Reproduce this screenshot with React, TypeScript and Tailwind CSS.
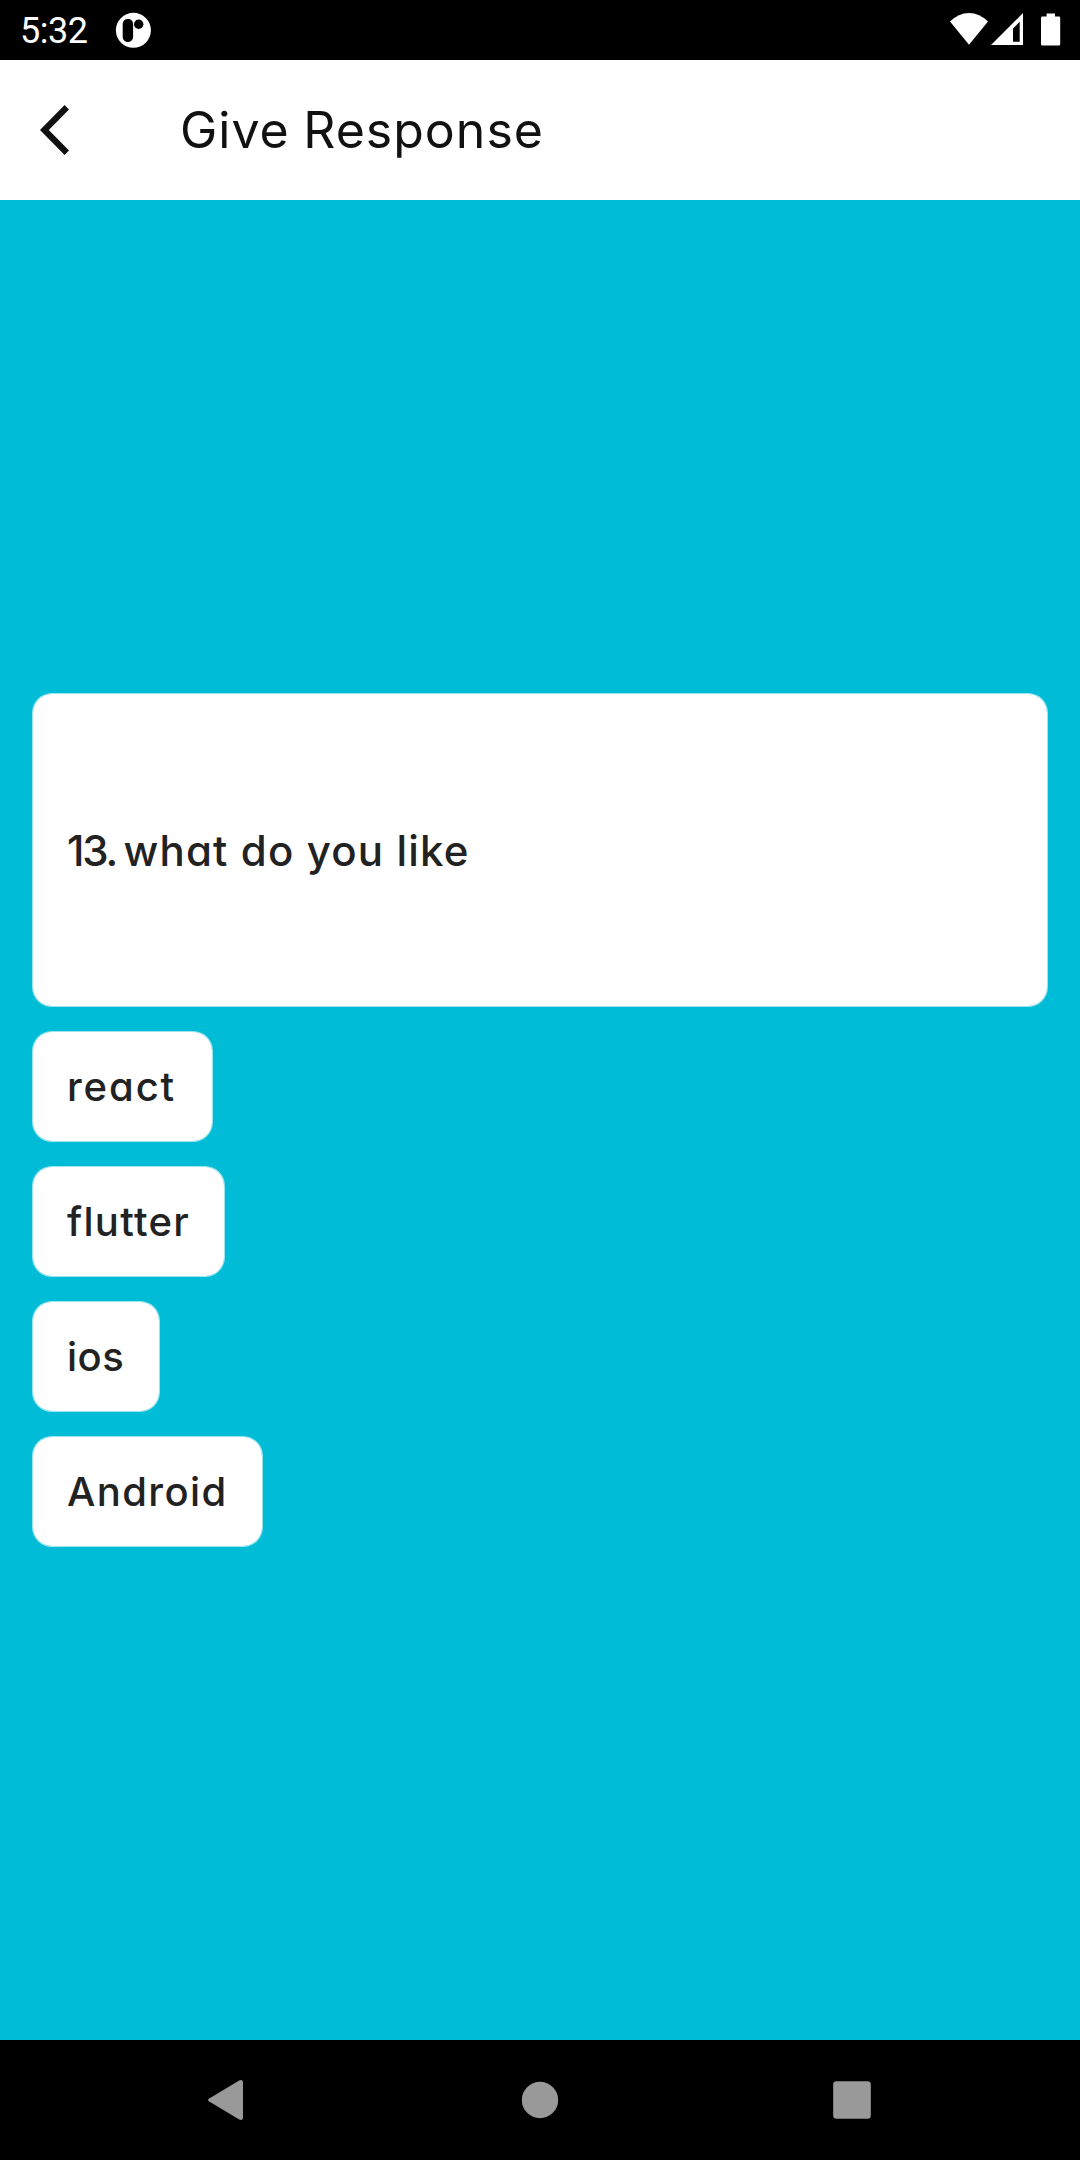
const options = [
  { label: "react", box: "w-[181px]", tracking: "tracking-[1.9px]" },
  { label: "flutter", box: "w-[193px]", tracking: "tracking-[1.3px]" },
  { label: "ios", box: "w-[128px]", tracking: "tracking-[0.5px]" },
  { label: "Android", box: "w-[231px]", tracking: "tracking-[1.4px]" },
];

function StatusBar() {
  return (
    <div className="flex h-[60px] shrink-0 items-center bg-black pl-5 pr-[19px] text-white">
      <span className="w-[95px] pt-px font-['Roboto',sans-serif] text-[36px] leading-none tracking-[-0.5px]">5:32</span>
      <svg className="h-9 w-9" viewBox="0 0 36 36">
        <circle cx="18.4" cy="18.3" r="17.5" fill="#fff" />
        <rect x="7.7" y="6.7" width="10.4" height="23.4" rx="5.2" fill="#000" />
        <circle cx="23.7" cy="12.3" r="4.7" fill="#000" />
      </svg>
      <div className="ml-auto flex items-center">
        <svg className="h-[34px] w-[39px]" viewBox="0 0 39 34" fill="#fff">
          <path d="M0 8.6Q8.5 0 19 0T38 8.6L19 31.8z" />
        </svg>
        <svg className="ml-[2px] h-[34px] w-8" viewBox="0 0 32 34" fill="#fff">
          <path fillRule="evenodd" d="M0 32L32 0V32zM22 15.5V28.8H28.7V8.8z" />
        </svg>
        <svg className="ml-[18px] h-[34px] w-5" viewBox="0 0 20 34" fill="#fff">
          <path d="M5.6 0.6H14V3.6H17.9Q19.2 3.6 19.2 4.9V31.2Q19.2 32.5 17.9 32.5H1.3Q0 32.5 0 31.2V4.9Q0 3.6 1.3 3.6H5.6z" />
        </svg>
      </div>
    </div>
  );
}

function AppBar() {
  return (
    <header className="flex h-[140px] shrink-0 items-center bg-white pl-10 text-[#111]">
      <button aria-label="Back" className="mr-[110px]">
        <svg className="h-[50px] w-[30px]" viewBox="0 0 30 50" fill="currentColor">
          <path d="M0 25L24.6 0L29 4.5L8.8 25L29 45.5L24.6 50z" />
        </svg>
      </button>
      <h1 className="text-[50px] font-normal leading-none tracking-[1px] [word-spacing:-1.5px]">Give Response</h1>
    </header>
  );
}

function NavBar() {
  return (
    <nav className="flex h-[120px] shrink-0 items-center justify-center gap-[272px] bg-black text-[#999]">
      <svg className="h-10 w-10" viewBox="0 0 40 40" fill="currentColor">
        <path d="M1.2 18.4L31.2 0.5Q35 -1.2 35 3V37Q35 41.2 31.2 39.5L1.2 21.6Q-1.2 20 1.2 18.4z" />
      </svg>
      <svg className="h-10 w-10" viewBox="0 0 40 40" fill="currentColor">
        <circle cx="20" cy="20" r="18.2" />
      </svg>
      <svg className="h-10 w-10" viewBox="0 0 40 40" fill="currentColor">
        <rect x="1.2" y="1.2" width="37.6" height="37.6" rx="3.2" />
      </svg>
    </nav>
  );
}

export default function App() {
  return (
    <div className="flex h-[2160px] w-[1080px] flex-col bg-[#00bcd7] font-['Inter',sans-serif] [font-feature-settings:'cv11']">
      <StatusBar />
      <AppBar />
      <main className="flex flex-1 flex-col items-start gap-6 px-8 pt-[493px] font-medium text-[#222]">
        <section className="flex h-[314px] w-full items-center rounded-[20px] border border-white/60 bg-white bg-clip-padding pl-[34px]">
          <p className="pt-[2px] text-[42px] leading-none tracking-[1.15px]">
            <span className="tracking-[-2.2px] [word-spacing:-1px]">13. </span>what do you like
          </p>
        </section>
        {options.map((o) => (
          <button
            key={o.label}
            className={`flex h-[111px] items-center rounded-[20px] border border-white/60 bg-white bg-clip-padding pl-[34px] ${o.box}`}
          >
            <span className={`text-[40px] leading-none ${o.tracking}`}>{o.label}</span>
          </button>
        ))}
      </main>
      <NavBar />
    </div>
  );
}
